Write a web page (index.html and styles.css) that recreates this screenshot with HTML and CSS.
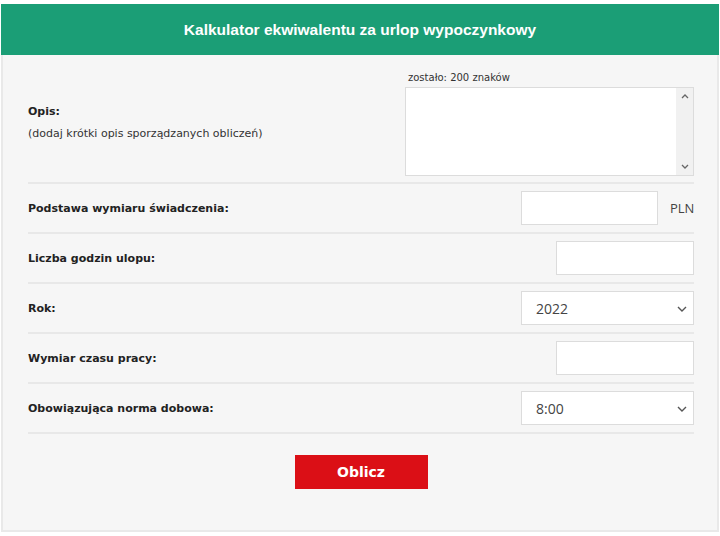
FILE: index.html
```html
<!DOCTYPE html>
<html lang="pl">
<head>
    <meta charset="UTF-8">
    <meta name="viewport" content="width=device-width, initial-scale=1.0">
    <title>Kalkulator ekwiwalentu za urlop wypoczynkowy</title>
    <link rel="stylesheet" href="styles.css">
</head>
<body>
    <div class="calc">
        <h1>Kalkulator ekwiwalentu za urlop wypoczynkowy</h1>

        <div class="panel">
            <div class="row row-desc">
                <div class="label">
                    <strong>Opis:</strong>
                    <span class="hint">(dodaj krótki opis sporządzanych obliczeń)</span>
                </div>
                <div class="desc-field">
                    <div class="counter">zostało: <span id="left">200</span> znaków</div>
                    <div class="area-wrap">
                        <textarea id="desc" maxlength="200"></textarea>
                        <div class="scrollbar">
                            <svg width="8" height="5" viewBox="0 0 8 5"><path d="M1 4l3-3 3 3" fill="none" stroke="#666" stroke-width="1.3"/></svg>
                            <svg width="8" height="5" viewBox="0 0 8 5"><path d="M1 1l3 3 3-3" fill="none" stroke="#666" stroke-width="1.3"/></svg>
                        </div>
                    </div>
                </div>
            </div>

            <div class="row">
                <label class="label" for="base"><strong>Podstawa wymiaru świadczenia:</strong></label>
                <div class="field">
                    <input type="text" id="base" class="input input-pln">
                    <span class="unit">PLN</span>
                </div>
            </div>

            <div class="row">
                <label class="label" for="hours"><strong>Liczba godzin ulopu:</strong></label>
                <div class="field">
                    <input type="text" id="hours" class="input">
                </div>
            </div>

            <div class="row">
                <label class="label" for="year"><strong>Rok:</strong></label>
                <div class="field select-wrap">
                    <select id="year" class="select">
                        <option>2020</option>
                        <option>2021</option>
                        <option selected>2022</option>
                        <option>2023</option>
                    </select>
                    <svg class="chevron" width="10" height="6" viewBox="0 0 10 6"><path d="M1 1l4 4 4-4" fill="none" stroke="#555" stroke-width="1.4"/></svg>
                </div>
            </div>

            <div class="row">
                <label class="label" for="worktime"><strong>Wymiar czasu pracy:</strong></label>
                <div class="field">
                    <input type="text" id="worktime" class="input">
                </div>
            </div>

            <div class="row">
                <label class="label" for="norm"><strong>Obowiązująca norma dobowa:</strong></label>
                <div class="field select-wrap">
                    <select id="norm" class="select">
                        <option selected>8:00</option>
                        <option>7:00</option>
                        <option>6:00</option>
                    </select>
                    <svg class="chevron" width="10" height="6" viewBox="0 0 10 6"><path d="M1 1l4 4 4-4" fill="none" stroke="#555" stroke-width="1.4"/></svg>
                </div>
            </div>

            <div class="actions">
                <button type="button" class="btn">Oblicz</button>
            </div>
        </div>
    </div>

    <script>
        // Licznik znaków w opisie
        const desc = document.getElementById('desc');
        const left = document.getElementById('left');
        desc.addEventListener('input', function() {
            left.textContent = 200 - desc.value.length;
        });
    </script>
</body>
</html>
```

FILE: styles.css
```css
body {
    margin: 0;
    background-color: #fff;
    font-family: "DejaVu Sans", Verdana, sans-serif;
    color: #222;
}
.calc {
    width: 718px;
    margin: 4px 0 0 1px;
}
h1 {
    margin: 0;
    height: 51px;
    line-height: 51px;
    background-color: #1b9e76;
    color: #fff;
    text-align: center;
    font-family: "Liberation Sans", Arial, sans-serif;
    font-size: 15.5px;
    font-weight: bold;
}
.panel {
    background-color: #f6f6f6;
    border: 2px solid #e9e9e9;
    border-top: 0;
    padding: 0 23px 0 25px;
    height: 475px;
}
.row {
    display: flex;
    align-items: center;
    justify-content: space-between;
    height: 48px;
    border-bottom: 2px solid #e8e8e8;
}
.row-desc {
    height: 127px;
    align-items: flex-start;
}
.row-desc .label {
    margin-top: 50px;
}
.label {
    font-size: 11px;
    color: #222;
}
.label strong {
    display: block;
}
.hint {
    display: block;
    margin-top: 9px;
    font-size: 11px;
    color: #333;
}
.desc-field {
    margin-top: 17px;
}
.counter {
    font-size: 10px;
    color: #333;
    margin: 0 0 4px 3px;
}
.area-wrap {
    position: relative;
}
textarea {
    display: block;
    width: 289px;
    height: 89px;
    box-sizing: border-box;
    border: 1px solid #dcdcdc;
    background: #fff;
    resize: none;
    overflow: hidden;
    margin: 0;
    padding-right: 20px;
}
.scrollbar {
    position: absolute;
    top: 1px;
    right: 1px;
    bottom: 1px;
    width: 17px;
    background-color: #f1f1f1;
    display: flex;
    flex-direction: column;
    justify-content: space-between;
    align-items: center;
    padding: 6px 0;
    box-sizing: border-box;
}
.field {
    display: flex;
    align-items: center;
}
.input {
    width: 138px;
    height: 34px;
    box-sizing: border-box;
    border: 1px solid #dcdcdc;
    background: #fff;
    margin: 0;
    font-size: 14px;
}
.input-pln {
    width: 137px;
}
.unit {
    margin-left: 12px;
    width: 24px;
    font-family: "Open Sans", sans-serif;
    font-size: 13px;
    color: #444;
}
.select-wrap {
    position: relative;
}
.select {
    appearance: none;
    width: 173px;
    height: 34px;
    box-sizing: border-box;
    border: 1px solid #dcdcdc;
    background: #fff;
    padding: 0 14px;
    margin: 0;
    font-family: "Open Sans", sans-serif;
    font-size: 14px;
    color: #444;
}
.chevron {
    position: absolute;
    right: 7px;
    top: 15px;
    pointer-events: none;
}
.actions {
    display: flex;
    justify-content: center;
    padding-top: 21px;
}
.btn {
    width: 133px;
    height: 34px;
    border: 0;
    background-color: #db0f16;
    color: #fff;
    font-family: "DejaVu Sans", Verdana, sans-serif;
    font-size: 14px;
    font-weight: bold;
    cursor: pointer;
}
```
